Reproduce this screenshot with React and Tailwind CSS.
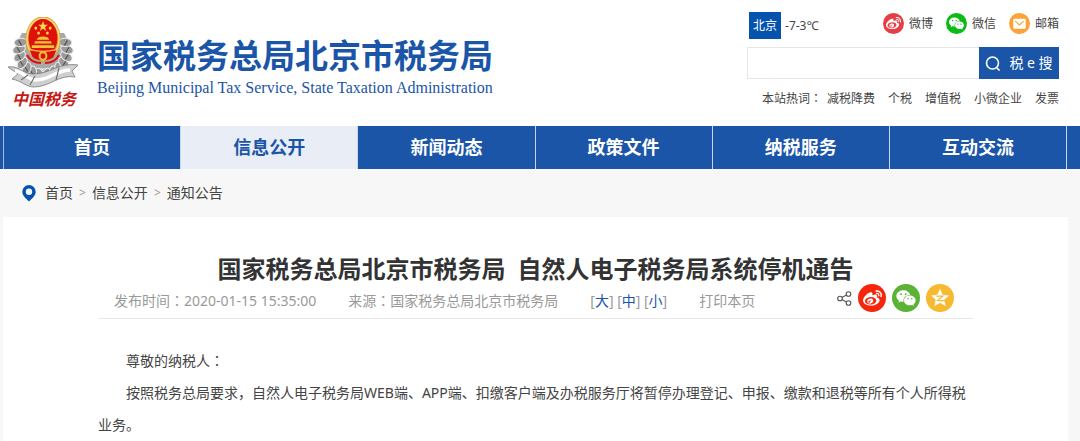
import React from "react";
import { FaWeibo } from "react-icons/fa";
import { AiFillWechat } from "react-icons/ai";

const navItems = [
  { label: "首页" },
  { label: "信息公开", active: true },
  { label: "新闻动态" },
  { label: "政策文件" },
  { label: "纳税服务" },
  { label: "互动交流" },
];

const hotWords = ["减税降费", "个税", "增值税", "小微企业", "发票"];

// Full-width colon centred in its cell.
function Mark({ children }) {
  return (
    <span lang="zh-TW" className="font-['Noto_Sans','Noto_Sans_CJK_TC',sans-serif]">
      {children}
    </span>
  );
}

function Emblem() {
  const leaves = [0, 1, 2, 3, 4, 5, 6, 7];
  return (
    <svg viewBox="0 0 74 94" className="h-[94px] w-[74px] shrink-0" role="img" aria-label="中国税务">
      <path d="M15 16C6 30 9 50 36 58 63 50 66 30 57 16z" fill="#a9a9a9" />
      {leaves.map((i) => {
        const t = 98 - i * 17;
        const a = (t * Math.PI) / 180;
        const dx = 24 * Math.cos(a);
        const y = 34 + 24 * Math.sin(a);
        return (
          <g key={i}>
            <ellipse cx={36 + dx} cy={y} rx="4.2" ry="6.5" fill="#9a9a9a" stroke="#ececec" strokeWidth="1" transform={`rotate(${t - 65} ${36 + dx} ${y})`} />
            <ellipse cx={36 - dx} cy={y} rx="4.2" ry="6.5" fill="#9a9a9a" stroke="#ececec" strokeWidth="1" transform={`rotate(${65 - t} ${36 - dx} ${y})`} />
            <path d={`M${36 + dx - 1} ${y + 3}l3-5M${36 - dx + 1} ${y + 3}l-3-5`} stroke="#4f4f4f" strokeWidth="1.1" />
          </g>
        );
      })}
      <g transform="translate(7.2 -1.5) scale(.8 .9)">
        <ellipse cx="36" cy="26" rx="22" ry="25" fill="#dfa52f" />
        <ellipse cx="36" cy="26" rx="20" ry="23" fill="none" stroke="#fae08a" strokeWidth="1.6" />
        <ellipse cx="36" cy="25" rx="18" ry="21" fill="#e0100d" />
        <path d="M36 6l1.6 4.2h4.5l-3.6 2.7 1.4 4.3-3.9-2.700-3.900 2.700 1.400-4.300-3.600-2.700h4.500z" fill="#ffdd45" />
        <g fill="#ffdd45">
          <circle cx="27" cy="14" r="1.7" />
          <circle cx="45" cy="14" r="1.7" />
          <circle cx="30.5" cy="19.5" r="1.7" />
          <circle cx="41.5" cy="19.5" r="1.7" />
        </g>
        <path d="M30 24.5q6-2.500 12 0l2 2.500H28zM26 28.500h20l1 2.500H25zM22 33h28v3H22z" fill="#f4c33c" />
        <path d="M19 38c5 3 29 3 34 0l-4 8c-5 5-21 5-26 0z" fill="#d8130d" />
        <path d="M20 38q16 4 32 0" fill="none" stroke="#f2bd3c" strokeWidth="1.4" />
        <circle cx="36" cy="45" r="5.5" fill="#efbd3e" />
        <circle cx="36" cy="45" r="3" fill="#d8130d" />
      </g>
      <path d="M20 38q4 8 14 8M52 38q-4 8-14 8" fill="none" stroke="#e0100d" strokeWidth="2" />
      <g transform="translate(0 -3)">
        <path d="M1 53c11-2 14 7 26 7 15 0 26-12 44-9l-6 6 3 6c-16-3-25 10-41 10-8 0-12-6-22-8l6-5z" fill="#cfcfcf" stroke="#777" strokeWidth=".8" />
        <path d="M8 57c10 1 12 9 21 9 14 0 20-10 34-10" fill="none" stroke="#fff" strokeWidth="3.5" />
        <path d="M14 66l7-5M23 71l5-9M52 54l-3 12" stroke="#6d6d6d" strokeWidth="1.1" />
      </g>
      <text x="37" y="88" textAnchor="middle" className="font-['Noto_Sans_CJK_SC',sans-serif] text-[16px] font-bold italic" fill="#c41a16">
        中国税务
      </text>
    </svg>
  );
}

function MailIcon() {
  return (
    <svg viewBox="0 0 22 22" className="size-[21px]" fill="none" aria-hidden="true">
      <circle cx="11" cy="11" r="11" fill="#fba338" />
      <rect x="4.5" y="6" width="13" height="10.5" rx="1" fill="#fff" />
      <path d="M6.500 8.500l4.500 4 4.500-4" stroke="#fba338" strokeWidth="1.2" />
    </svg>
  );
}

function ShareIcon() {
  return (
    <svg viewBox="0 0 15 15" className="size-[15px]" fill="none" stroke="#555" strokeWidth="1.1" aria-hidden="true">
      <circle cx="3" cy="7.5" r="2.3" />
      <circle cx="11.5" cy="3" r="2.3" />
      <circle cx="11.5" cy="12" r="2.3" />
      <path d="M5 6.400l4.400-2.300M5 8.600l4.400 2.300" />
    </svg>
  );
}

function QzoneIcon() {
  return (
    <svg viewBox="0 0 28 28" className="size-7" aria-hidden="true">
      <circle cx="14" cy="14" r="14" fill="#f6b92f" />
      <path d="M14 5.500l2.500 5.600 6 .6-4.500 4 1.300 5.900-5.300-3.100-5.300 3.100 1.300-5.900-4.500-4 6-.6z" fill="#fff" stroke="#fff" strokeWidth=".6" strokeLinejoin="round" />
      <path d="M10.500 12.200h6.300l-5.300 4.200q4 .9 8 0" fill="none" stroke="#f6b92f" strokeWidth="1.2" />
    </svg>
  );
}

function QuickLink({ icon, children }) {
  return (
    <a href="#" className="flex items-center gap-[5px]">
      {icon}
      <span>{children}</span>
    </a>
  );
}

export default function App() {
  return (
    <div className="min-h-screen bg-[#f7f7f7] font-['Noto_Sans','Noto_Sans_CJK_SC',sans-serif] text-sm text-[#444]" lang="zh-CN">
      <header className="flex h-[126px] items-start justify-between bg-white pr-[21px] pl-[7px]">
        <a href="#" className="flex items-start gap-4 pt-[17px] text-[#1a55a8]">
          <Emblem />
          <div className="pt-[19px] whitespace-nowrap">
            <div className="text-[33px] leading-10 font-bold">国家税务总局北京市税务局</div>
            <div className="font-['Liberation_Serif',serif] text-base leading-6">
              Beijing Municipal Tax Service, State Taxation Administration
            </div>
          </div>
        </a>
        <div className="w-[312px] pt-3 text-xs">
          <div className="flex items-start justify-between">
            <div className="flex items-center gap-1 pl-0.5">
              <span className="bg-[#0653ae] px-1 leading-[27px] text-white">北京</span>
              <span>-7-3℃</span>
            </div>
            <div className="flex gap-[13px] pt-px">
              <QuickLink icon={<span className="flex size-[21px] items-center justify-center rounded-full bg-[#e63e45] text-white"><FaWeibo size={15} /></span>}>微博</QuickLink>
              <QuickLink icon={<span className="flex size-[21px] items-center justify-center rounded-full bg-[#09bb14] text-white"><AiFillWechat size={17} /></span>}>微信</QuickLink>
              <QuickLink icon={<MailIcon />}>邮箱</QuickLink>
            </div>
          </div>
          <form className="mt-2 flex h-8" onSubmit={(e) => e.preventDefault()}>
            <input aria-label="搜索" className="min-w-0 flex-1 border border-r-0 border-[#e6e6e6] bg-white px-2 outline-none" />
            <button className="flex w-20 items-center justify-center gap-2 bg-[#1a55a8] text-white">
              <svg viewBox="0 0 16 16" className="size-4" fill="none" stroke="currentColor" strokeWidth="1.6" aria-hidden="true">
                <circle cx="7.5" cy="8" r="6" />
                <path d="M11.500 12.500l3 3" />
              </svg>
              <span className="text-sm">税 e 搜</span>
            </button>
          </form>
          <div className="mt-[11px] flex justify-end gap-[13px] leading-[18px] whitespace-nowrap">
            <span className="-mr-2">本站热词<Mark>：</Mark></span>
            {hotWords.map((w) => (
              <a key={w} href="#">{w}</a>
            ))}
          </div>
        </div>
      </header>

      <nav className="bg-[#1a55a8] pr-[13px] pl-[3px]">
        <div className="flex border-l border-[#a3bbdc]">
          {navItems.map((item) => (
            <a
              key={item.label}
              href="#"
              className={
                "flex-1 border-r border-[#c8d6ea] text-center text-lg leading-[43px] font-bold " +
                (item.active ? "bg-[#e8edf6] text-[#1a55a8]" : "text-white")
              }
            >
              {item.label}
            </a>
          ))}
        </div>
      </nav>

      <div className="flex h-12 items-center gap-[9px] pl-[22px]">
        <svg viewBox="0 0 14 17" className="h-[17px] w-[14px]" aria-hidden="true">
          <path fillRule="evenodd" d="M7 0a6.700 6.700 0 0 1 6.700 6.700C13.700 10.500 10.500 13 7 16.500 3.500 13 .3 10.500.3 6.700A6.700 6.700 0 0 1 7 0zm0 3.600a3.200 3.200 0 1 0 0 6.400 3.200 3.200 0 0 0 0-6.400z" fill="#0653ae" />
        </svg>
        <div className="flex items-center gap-[6px]">
          <a href="#">首页</a>
          <span className="text-xs text-[#999]">&gt;</span>
          <a href="#">信息公开</a>
          <span className="text-xs text-[#999]">&gt;</span>
          <a href="#">通知公告</a>
        </div>
      </div>

      <main className="mr-3 ml-[3px] bg-white px-[95px] pt-9 pb-1">
        <h1 className="flex justify-center gap-3 text-2xl leading-8 font-bold whitespace-nowrap text-[#333]">
          <span>国家税务总局北京市税务局</span>
          <span>自然人电子税务局系统停机通告</span>
        </h1>
        <div className="flex h-[34px] items-start justify-between border-b border-[#e8e8e8] pr-[19px] pl-4 whitespace-nowrap text-[#999]">
          <div className="flex gap-8 leading-8">
            <span>发布时间<Mark>：</Mark>2020-01-15 15:35:00</span>
            <span>来源<Mark>：</Mark>国家税务总局北京市税务局</span>
            <span>
              [<button className="text-[#1a55a8]">大</button>] [<button className="text-[#1a55a8]">中</button>] [<button className="text-[#1a55a8]">小</button>]
            </span>
            <button>打印本页</button>
          </div>
          <div className="flex h-[26px] items-center gap-[6px]">
            <ShareIcon />
            <a href="#" aria-label="微博" className="flex size-7 items-center justify-center rounded-full bg-[#f5260c] text-white"><FaWeibo size={19} /></a>
            <a href="#" aria-label="微信" className="flex size-7 items-center justify-center rounded-full bg-[#5bb336] text-white"><AiFillWechat size={22} /></a>
            <a href="#" aria-label="QQ空间"><QzoneIcon /></a>
          </div>
        </div>
        <article className="pt-[26px] leading-8">
          <p className="indent-7">尊敬的纳税人<Mark>：</Mark></p>
          <p className="indent-7">
            按照税务总局要求，自然人电子税务局WEB端、APP端、扣缴客户端及办税服务厅将暂停办理登记、申报、缴款和退税等所有个人所得税业务。
          </p>
        </article>
      </main>
    </div>
  );
}
